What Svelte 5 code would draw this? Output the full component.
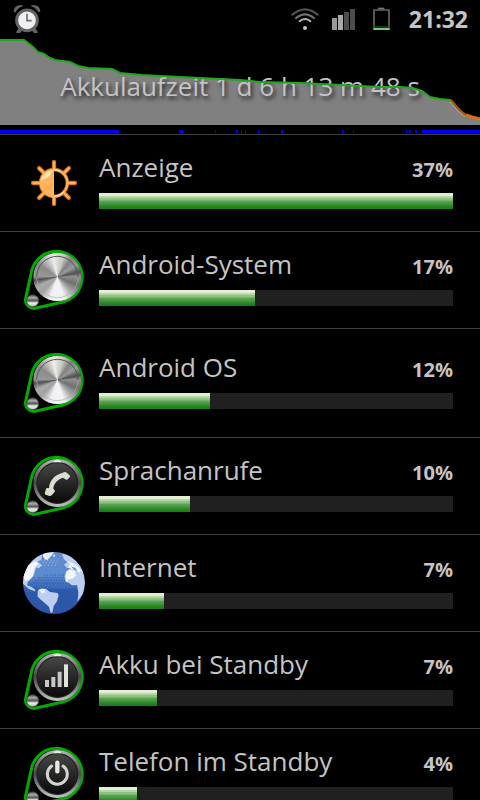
<script>
  const apps = [
    { name: 'Anzeige', share: 37, icon: 'sun' },
    { name: 'Android-System', share: 17, bar: 44.1, icon: 'metal' },
    { name: 'Android OS', share: 12, bar: 31.4, icon: 'metal', tall: true },
    { name: 'Sprachanrufe', share: 10, bar: 25.7, icon: 'phone' },
    { name: 'Internet', share: 7, bar: 18.4, icon: 'globe' },
    { name: 'Akku bei Standby', share: 7, bar: 16.4, icon: 'signal' },
    { name: 'Telefon im Standby', share: 4, bar: 10.7, icon: 'power' }
  ];
  const good = '0,2 24,2 28,5 33,9 38,14 44,16 50,20 55,22 70,24 78,28 88,30 112,31 120,35 142,37 160,38 200,40 240,42 260,44 300,45 340,47 380,49 400,49 412,50 422,53 430,59 440,61 451,62';
  const low = '451,62 457,69 461,73 466,77';
  const critical = '466,77 472,79 480,81';
  const awake = [[0, 119], [179, 4], [215, 1], [236, 2], [241, 1], [245, 1], [258, 1], [281, 2], [342, 1], [353, 1], [406, 1], [409, 2], [415, 2], [422, 58]];
  const rays = [0, 45, 90, 135, 180, 225, 270, 315];
</script>

<main class="screen">
  <header class="status">
    <svg class="alarm" viewBox="0 0 84 88" aria-label="Wecker">
      <g fill="#646464"><path d="M2 22Q3 2 23 2Q29 2 31 5Q14 10 8 24ZM82 22Q81 2 61 2Q55 2 53 5Q70 10 76 24Z" />
        <path d="M17 72L10 82V86H21L28 78ZM67 72L74 82V86H63L56 78Z" /></g>
      <circle cx="42" cy="48" r="31" fill="#f0f0f4" stroke="#646464" stroke-width="9" />
      <path d="M42 28V49H56" fill="none" stroke="#707070" stroke-width="5" />
    </svg>
    <svg class="wifi" viewBox="0 0 84 66" fill="none" stroke-width="6" aria-label="WLAN">
      <path d="M2 22Q42-14 82 22" stroke="#505050" />
      <path d="M13 32Q42 6 71 32" stroke="#707070" />
      <path d="M24 41Q42 25 60 41" stroke="#b4b4b4" />
      <circle cx="42" cy="60" r="6" fill="#c4c4c4" />
    </svg>
    <svg class="bars" viewBox="0 0 72 66" aria-label="Empfang">
      <path d="M0 30H15V66H0Z" fill="#999" /><path d="M18 21H33V66H18Z" fill="#aaa" />
      <path d="M36 12H51V66H36ZM54 3H69V66H54Z" fill="#4c4c4c" />
    </svg>
    <svg class="battery" viewBox="0 0 51 72" aria-label="Akku">
      <path d="M3 56V9H48V56" fill="none" stroke="#666" stroke-width="5" />
      <path d="M15 7V2H34V7Z" fill="#777" />
      <path d="M3 57V66H48V57" fill="#123812" stroke="#2d7b2d" stroke-width="4" />
      <path d="M1 66H50" stroke="#79c879" stroke-width="6" />
    </svg>
    <time>21:32</time>
  </header>

  <section class="history">
    <svg viewBox="0 0 480 87" preserveAspectRatio="none" aria-hidden="true">
      <polygon points="{good} {low} {critical} 480,87 0,87" fill="#808080" />
    </svg>
    <h1>Akkulaufzeit 1 d 6 h 13 m 48 s</h1>
    <svg viewBox="0 0 480 87" preserveAspectRatio="none" fill="none" stroke-width="2" aria-hidden="true">
      <polyline points={good} stroke="#1fa81f" />
      <polyline points={low} stroke="#b34a08" />
      <polyline points={low} stroke="#7acb7a" stroke-width="1" transform="translate(-1 2)" />
      <polyline points={critical} stroke="#df6f15" stroke-width="3" />
    </svg>
  </section>
  <svg class="awake" viewBox="0 0 480 3" preserveAspectRatio="none" shape-rendering="crispEdges" aria-hidden="true">
    {#each awake as [x, w]}<rect {x} y="0" width={w} height="3" fill="#00f" />{/each}
  </svg>

  <ul>
    {#each apps as app}
      <li>
        <button class:tall={app.tall}>
          <span class="icon">
            {#if app.icon === 'sun'}
              <svg class="sun" viewBox="0 0 138 138">
                {#each rays as a}
                  <g transform="rotate({a} 69 69)"><path d="M69 6V25" stroke="#cf6a14" stroke-width="13" stroke-linecap="round" /></g>
                {/each}
                <circle cx="69" cy="69" r="40" fill="#000" stroke="#cf6a14" stroke-width="11" />
                <circle cx="69" cy="69" r="40" fill="none" stroke="#ffb45c" stroke-width="6" />
                {#each rays as a}
                  <g transform="rotate({a} 69 69)"><path d="M69 7V28" stroke="#ffb45c" stroke-width="7" stroke-linecap="round" /></g>
                {/each}
                <path d="M69 29A40 40 0 0 0 69 109Z" fill="#ffb45c" />
                <path d="M30 63Q34 35 66 29Q61 46 47 54Q37 57 30 63Z" fill="#fbe2ae" />
                <path d="M38 83L64 75M39 90L60 82" stroke="#e8913a" stroke-width="3" stroke-dasharray="3 3" />
                <path d="M70 109Q88 107 99 95M70 29Q78 29 86 33" stroke="#fff0c8" stroke-width="3" fill="none" />
              </svg>
            {:else if app.icon === 'globe'}
              <svg class="globe" viewBox="0 0 188 188">
                <defs>
                  <clipPath id="earth"><circle cx="94" cy="94" r="94" /></clipPath>
                  <linearGradient id="sea" x2="0" y2="1"><stop offset=".1" stop-color="#5d8cd0" /><stop offset=".38" stop-color="#5b8bd0" /><stop offset=".62" stop-color="#2d59ab" /><stop offset="1" stop-color="#2a55a8" /></linearGradient>
                </defs>
                <g clip-path="url(#earth)">
                  <rect width="188" height="188" fill="url(#sea)" />
                  <path d="M16 30L38 12L58 8L55 24L44 29L58 40L48 49L40 47L36 59L32 72L23 83L15 90L12 101L26 106L38 115L36 119L18 112L0 96V50Z" fill="#bdcff0" />
                  <path d="M16 40L37 27L48 37L39 42L34 54L30 72L19 84L7 88L0 75Z" fill="#f4f6fb" />
                  <path d="M62 3L94 0L86 11L74 24L67 23L60 12Z" fill="#eef2fb" />
                  <path d="M92 7L98 9L97 15L90 14Z" fill="#c9d8f3" />
                  <path d="M118 5L148 12L175 43L184 65L188 94L183 124L165 151L168 126L164 100L149 101L139 94L128 88L126 73L133 58L145 51L132 47L124 39L134 31L124 22Z" fill="#bdcff0" />
                  <path d="M134 25L153 36L166 44L178 57L170 62L158 54L145 50L136 46L143 38ZM130 61L141 52L158 58L160 72L149 82L138 83L130 94Z" fill="#f1f5fc" />
                  <path d="M145 44L158 48L166 57L156 54Z" fill="#638dce" />
                  <path d="M45 117L56 111L70 112L82 121L105 124L108 131L103 149L93 164L89 184H84L78 165L64 153L54 145L44 135Z" fill="#bdcff0" />
                  <path d="M48 114L66 112L68 122L58 126Z" fill="#edf3fc" />
                  <g stroke="#a9c2e8" stroke-width="3" stroke-dasharray="3 7">
                    <path d="M54 25H112M59 32H110M56 40H105" /></g>
                  <g stroke="#2d59ab" stroke-width="3" stroke-dasharray="3 5">
                    <path d="M65 70H126M48 78H127M37 86H129M33 94H137" /></g>
                  <g stroke="#6e98d7" stroke-width="2" stroke-dasharray="3 7"><path d="M47 102H163M12 119H38M53 108H155" /></g>
                </g>
              </svg>
            {:else}
              <svg class="knob" viewBox="0 0 180 180">
                <defs>
                  <linearGradient id="rim" x2="0" y2="1"><stop offset="0" stop-color="#bbb" /><stop offset=".25" stop-color="#777" /><stop offset=".5" stop-color="#484848" /><stop offset=".75" stop-color="#888" /><stop offset="1" stop-color="#c4c4c4" /></linearGradient>
                  <linearGradient id="face" x2="0" y2="1"><stop offset="0" stop-color="#484848" /><stop offset=".55" stop-color="#242424" /><stop offset="1" stop-color="#080808" /></linearGradient>
                  <linearGradient id="pin" x2="0" y2="1"><stop offset="0" stop-color="#444" /><stop offset=".25" stop-color="#aaa" /><stop offset=".5" stop-color="#555" /><stop offset=".7" stop-color="#eee" /><stop offset="1" stop-color="#bbb" /></linearGradient>
                </defs>
                <path d="M24 58A77 77 0 1 1 116 156L33 175A25 25 0 0 1 5 145Z" fill="#000" stroke="#00ac00" stroke-width="9" />
                <circle cx="100" cy="81" r="72" fill="url(#rim)" />
                {#if app.icon === 'metal'}
                  <foreignObject x="28" y="9" width="144" height="144"><div class="steel"></div></foreignObject>
                  <path d="M38 81A62 62 0 0 1 162 81" fill="none" stroke="#555" stroke-width="3" />
                  <path d="M38 81A62 62 0 0 0 162 81" fill="none" stroke="#aaa" stroke-width="2" />
                {:else}
                  <circle cx="100" cy="81" r="61" fill="url(#face)" stroke="#222" stroke-width="4" />
                  <path d="M88 14Q100 10 112 14L110 19H90Z" fill="#e8eee2" />
                  {#if app.icon === 'phone'}
                    <path d="M62 113L66 98Q68 95 72 96L75 97C76 76 90 58 112 52L120 49Q124 47 128 50L137 58Q139 61 137 64L131 70Q128 73 124 70L117 65C102 69 89 82 88 98L92 103Q94 106 91 109L83 118Q80 121 76 120L65 116Z" fill="#d9ddd2" />
                  {:else if app.icon === 'signal'}
                    <path d="M63 90H75V111H63ZM82 81H94V111H82ZM101 65H113V111H101Z" fill="#c8c8c8" /><path d="M120 43H132V111H120Z" fill="#dee5d8" />
                  {:else}
                    <path d="M83 57A30 30 0 1 0 117 57" fill="none" stroke="#d2d4cf" stroke-width="9" stroke-linecap="round" />
                    <path d="M100 47V73" stroke="#e3eadb" stroke-width="13" stroke-linecap="round" />
                  {/if}
                {/if}
                <circle cx="26" cy="152" r="18" fill="url(#pin)" stroke="#444" stroke-width="2" />
              </svg>
            {/if}
          </span>
          <span class="info">
            <span class="line"><span class="name">{app.name}</span><span class="share">{app.share}%</span></span>
            <span class="track"><span class="fill" style="width: {app.bar ?? 100}%"></span></span>
          </span>
        </button>
      </li>
    {/each}
  </ul>
</main>

<style>
  :global(body) { background: #000; }
  .screen {
    height: 100vh;
    display: flex;
    flex-direction: column;
    overflow: hidden;
    background: #000;
    color: #c4c4c4;
    font-family: "Open Sans", "Noto Sans", sans-serif;
  }
  svg { display: block; flex: none; }
  .status {
    display: flex;
    align-items: center;
    height: 38px;
    flex: none;
    padding: 0 12px 0 13px;
  }
  .alarm { width: 28px; height: 30px; margin-right: auto; }
  .wifi { width: 28px; height: 22px; margin-right: 13px; }
  .bars { width: 24px; height: 22px; margin-right: 17px; }
  .battery { width: 17px; height: 24px; margin-right: 19px; }
  time { font-size: 23px; font-weight: 700; line-height: 38px; }
  .history { display: grid; height: 87px; flex: none; }
  .history > * { grid-area: 1 / 1; width: 100%; height: 87px; min-width: 0; }
  h1 {
    margin: 0;
    text-align: center;
    font-size: 26px;
    font-weight: 500;
    line-height: 96px;
    white-space: nowrap;
    text-shadow: 2px 3px 4px #222;
  }
  .awake { width: 100%; height: 3px; margin: 5px 0 1px; }
  ul {
    flex: 1;
    min-height: 0;
    margin: 0;
    padding: 0;
    overflow-y: auto;
    scrollbar-width: none;
    list-style: none;
    border-top: 1px solid #3e3e3e;
  }
  button {
    display: flex;
    align-items: center;
    gap: 14px;
    width: 100%;
    height: 97px;
    padding: 0 27px 0 23px;
    border: 0;
    border-bottom: 1px solid #3e3e3e;
    background: none;
    color: inherit;
    font: inherit;
    text-align: left;
  }
  .tall { height: 109px; }
  .icon { display: flex; justify-content: center; width: 62px; flex: none; }
  .sun { width: 46px; height: 46px; }
  .globe { width: 62px; height: 62px; }
  .knob { width: 60px; height: 60px; }
  .steel {
    width: 144px;
    height: 144px;
    border-radius: 50%;
    background: conic-gradient(#d8dcd0 0deg, #c8c8c4 16deg, #808080 38deg, #9a9a9a 58deg, #505050 78deg, #909090 88deg, #707070 112deg, #aaa 138deg, #f2f2f6 162deg, #f2f2f6 198deg, #a0a0a0 225deg, #acacac 245deg, #505050 262deg, #999 272deg, #8a8a8a 305deg, #c0c0c0 328deg, #eef0ea 348deg, #d8dcd0 360deg);
  }
  .info { display: flex; flex-direction: column; flex: 1; min-width: 0; gap: 16px; }
  .line { display: flex; justify-content: space-between; align-items: baseline; height: 20px; line-height: 20px; }
  .name { font-size: 26px; font-weight: 500; white-space: nowrap; }
  .share { font-size: 20px; font-weight: 700; }
  .track { display: block; height: 16px; background: #202020; }
  .fill {
    display: block;
    height: 16px;
    background: linear-gradient(#e2efd2 0 3px, #b5d8a5 3px 5px, #8cc283 5px 7px, #5fa657 8px, #44963e 11px, #1f821c 14px, #128012 16px);
  }
</style>
